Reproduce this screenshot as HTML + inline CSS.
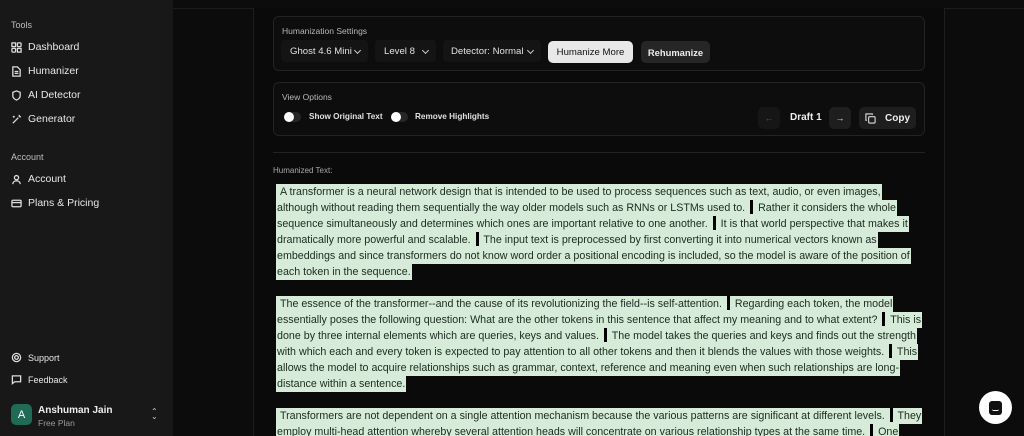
<!DOCTYPE html>
<html><head><meta charset="utf-8"><style>
*{box-sizing:border-box;margin:0;padding:0}
html,body{width:1024px;height:436px;overflow:hidden}
body{background:#0b0b0b;font-family:"Liberation Sans",sans-serif;position:relative;color:#e6e6e6}
.side{position:absolute;left:0;top:0;width:173px;height:436px;background:#181818}
.sh{position:absolute;left:11px;font-size:9px;color:#bdbdbd}
.it{position:absolute;left:11px;font-size:10.5px;color:#e8e8e8;display:flex;align-items:center;gap:6px}
.it svg{width:11px;height:11px;stroke:#ddd;fill:none;stroke-width:1.4}
.main{position:absolute;left:173px;top:0;right:0;bottom:0;background:#0c0c0c}
.topl{position:absolute;left:173px;right:0;top:8px;height:1px;background:#1c1c1c}
.col{position:absolute;left:253px;top:8px;width:692px;bottom:0;border-left:1px solid #1e1e1e;border-right:1px solid #1e1e1e;background:#0a0a0a}
.box{position:absolute;left:273px;width:652px;border:1px solid #232323;border-radius:6px;background:#0d0d0d}
.lbl{position:absolute;font-size:8.5px;color:#b8b8b8}
.sel{position:absolute;top:40px;height:22px;background:#141414;border-radius:4px;font-size:9.6px;color:#e0e0e0;display:flex;align-items:center;padding-left:9px}
.sel:after{content:"";position:absolute;right:8px;top:8px;width:4px;height:4px;border-right:1.3px solid #ccc;border-bottom:1.3px solid #ccc;transform:rotate(45deg)}
.btn{position:absolute;height:22px;border-radius:5px;font-size:10px;display:flex;align-items:center;justify-content:center}
.tg{position:absolute;top:112px;width:17px;height:10px;border-radius:5px;background:#262626}
.tg:before{content:"";position:absolute;left:0;top:0;width:10px;height:10px;border-radius:5px;background:#fff}
.tl{position:absolute;top:112px;font-size:8.2px;font-weight:bold;color:#e0e0e0}
.txt{position:absolute;left:276px;font-size:10.7px;color:#1e2a20}
.ln{height:16.1px;line-height:16.1px;white-space:nowrap}
.ln span.h{background:#d6ecd9;padding:2px 1px}
.b{display:inline-block;width:3px;height:14px;background:#000;vertical-align:-3px;margin:0 2px}
</style></head><body>
<div class="side">
<div class="sh" style="top:20px">Tools</div>
<div class="it" style="top:41px"><svg viewBox="0 0 12 12"><rect x="1" y="1" width="4" height="4"/><rect x="7" y="1" width="4" height="4" rx="1"/><rect x="1" y="7" width="4" height="4" rx="1"/><rect x="7" y="7" width="4" height="4"/></svg>Dashboard</div>
<div class="it" style="top:65px"><svg viewBox="0 0 12 12"><path d="M2 1h5l3 3v7H2z M4 6h4 M4 8h4"/></svg>Humanizer</div>
<div class="it" style="top:89px"><svg viewBox="0 0 12 12"><path d="M6 1l4 1.5v4c0 2-2 3.5-4 4.5-2-1-4-2.5-4-4.5v-4z"/></svg>AI Detector</div>
<div class="it" style="top:113px"><svg viewBox="0 0 12 12"><path d="M2 10l6-6 M9 1v2 M11 3H9 M3 2v2 M4 3H2"/></svg>Generator</div>
<div class="sh" style="top:152px">Account</div>
<div class="it" style="top:173px"><svg viewBox="0 0 12 12"><circle cx="6" cy="4" r="2.3"/><path d="M2 11c0-2.5 2-3.5 4-3.5s4 1 4 3.5"/></svg>Account</div>
<div class="it" style="top:197px"><svg viewBox="0 0 12 12"><rect x="1" y="2.5" width="10" height="7" rx="1"/><path d="M1 5h10"/></svg>Plans &amp; Pricing</div>
<div class="it" style="top:352px;font-size:9px"><svg viewBox="0 0 12 12"><circle cx="6" cy="6" r="4.5"/><circle cx="6" cy="6" r="2"/></svg>Support</div>
<div class="it" style="top:374px;font-size:9px"><svg viewBox="0 0 12 12"><path d="M1.5 2h9v6.5H4L1.5 10.5z"/></svg>Feedback</div>
<div style="position:absolute;left:11px;top:404px;width:21px;height:21px;border-radius:5px;background:#1f6b55;color:#fff;font-size:11px;display:flex;align-items:center;justify-content:center">A</div>
<div style="position:absolute;left:38px;top:405px;font-size:10px;font-weight:bold;color:#eee">Anshuman Jain</div>
<div style="position:absolute;left:38px;top:418px;font-size:8.5px;color:#9a9a9a">Free Plan</div>
<div style="position:absolute;left:151px;top:409px;font-size:8px;color:#ccc;line-height:5px">&#8963;<br>&#8964;</div>
</div>
<div class="main"></div>
<div class="topl"></div>
<div class="col"></div>
<div class="box" style="top:16px;height:55px"></div>
<div class="lbl" style="left:282px;top:26px">Humanization Settings</div>
<div class="sel" style="left:281px;width:87px">Ghost 4.6 Mini</div>
<div class="sel" style="left:375px;width:61px">Level 8</div>
<div class="sel" style="left:443px;width:98px;padding-left:8px">Detector: Normal</div>
<div class="btn" style="left:548px;top:41px;width:85px;background:#e8e8e8;color:#111;font-size:9.6px">Humanize More</div>
<div class="btn" style="left:641px;top:41px;width:69px;background:#262626;color:#eee;font-weight:bold;font-size:9.4px">Rehumanize</div>
<div class="box" style="top:82px;height:54px"></div>
<div class="lbl" style="left:282px;top:92px">View Options</div>
<div class="tg" style="left:284px"></div><div class="tl" style="left:309px">Show Original Text</div>
<div class="tg" style="left:391px"></div><div class="tl" style="left:415px">Remove Highlights</div>
<div class="btn" style="left:758px;top:107px;width:22px;background:#161616;color:#555;font-size:9px">←</div>
<div style="position:absolute;left:790px;top:112px;font-size:10px;font-weight:bold;color:#eee">Draft 1</div>
<div class="btn" style="left:829px;top:107px;width:22px;background:#1e1e1e;color:#ddd;font-size:9px">→</div>
<div class="btn" style="left:859px;top:107px;width:57px;background:#1e1e1e;color:#eee;font-size:10px;font-weight:bold;gap:9px"><svg width="11" height="11" viewBox="0 0 12 12" fill="none" stroke="#ddd" stroke-width="1.2"><rect x="4" y="4" width="7" height="7" rx="1"/><path d="M8 2V1H1v7h1"/></svg>Copy</div>
<div style="position:absolute;left:273px;top:152px;width:652px;height:1px;background:#222"></div>
<div class="lbl" style="left:273px;top:166px;font-size:8px;color:#a8a8a8">Humanized Text:</div>
<div class="txt" style="top:184px">
<div class="ln"><span class="h">&nbsp;A transformer is a neural network design that is intended to be used to process sequences such as text, audio, or even images,</span></div>
<div class="ln"><span class="h">although without reading them sequentially the way older models such as RNNs or LSTMs used to. <i class="b"></i> Rather it considers the whole</span></div>
<div class="ln"><span class="h">sequence simultaneously and determines which ones are important relative to one another. <i class="b"></i> It is that world perspective that makes it</span></div>
<div class="ln"><span class="h">dramatically more powerful and scalable. <i class="b"></i> The input text is preprocessed by first converting it into numerical vectors known as</span></div>
<div class="ln"><span class="h">embeddings and since transformers do not know word order a positional encoding is included, so the model is aware of the position of</span></div>
<div class="ln"><span class="h">each token in the sequence.</span></div>
</div>
<div class="txt" style="top:296px">
<div class="ln"><span class="h">&nbsp;The essence of the transformer--and the cause of its revolutionizing the field--is self-attention. <i class="b"></i> Regarding each token, the model</span></div>
<div class="ln"><span class="h">essentially poses the following question: What are the other tokens in this sentence that affect my meaning and to what extent? <i class="b"></i> This is</span></div>
<div class="ln"><span class="h">done by three internal elements which are queries, keys and values. <i class="b"></i> The model takes the queries and keys and finds out the strength</span></div>
<div class="ln"><span class="h">with which each and every token is expected to pay attention to all other tokens and then it blends the values with those weights. <i class="b"></i> This</span></div>
<div class="ln"><span class="h">allows the model to acquire relationships such as grammar, context, reference and meaning even when such relationships are long-</span></div>
<div class="ln"><span class="h">distance within a sentence.</span></div>
</div>
<div class="txt" style="top:408px">
<div class="ln"><span class="h">&nbsp;Transformers are not dependent on a single attention mechanism because the various patterns are significant at different levels. <i class="b"></i> They</span></div>
<div class="ln"><span class="h">employ multi-head attention whereby several attention heads will concentrate on various relationship types at the same time. <i class="b"></i> One</span></div>
</div>
<div style="position:absolute;left:979px;top:391px;width:33px;height:33px;border-radius:50%;background:#fff;display:flex;align-items:center;justify-content:center"><div style="width:13px;height:14px;background:#111;border-radius:3px;position:relative"><div style="position:absolute;left:3px;top:8px;width:7px;height:2px;border-bottom:1px solid #fff;border-radius:0 0 4px 4px"></div></div></div>
</body></html>
